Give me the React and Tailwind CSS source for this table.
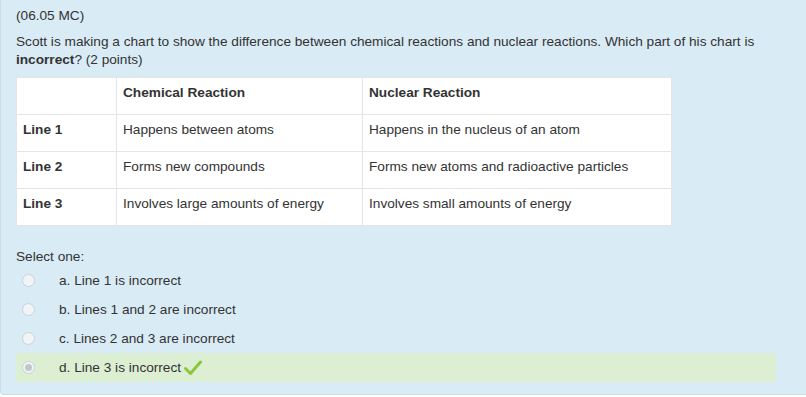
const rows = [
  ['Line 1', 'Happens between atoms', 'Happens in the nucleus of an atom'],
  ['Line 2', 'Forms new compounds', 'Forms new atoms and radioactive particles'],
  ['Line 3', 'Involves large amounts of energy', 'Involves small amounts of energy'],
];

const options = [
  { label: 'a. Line 1 is incorrect' },
  { label: 'b. Lines 1 and 2 are incorrect' },
  { label: 'c. Lines 2 and 3 are incorrect' },
  { label: 'd. Line 3 is incorrect', checked: true, correct: true },
];

function Radio({ checked }) {
  return (
    <span className="flex h-[13px] w-[13px] items-center justify-center rounded-full border border-[#c9d3d8] bg-[#f1f4f6]">
      {checked && <span className="h-[7px] w-[7px] rounded-full bg-[#c2c6c8]" />}
    </span>
  );
}

function Check() {
  return (
    <svg width="18" height="16" viewBox="0 0 18 16" className="ml-[3px] inline-block">
      <path d="M1.5 8.5 L6.5 13.5 L16.5 2" fill="none" stroke="#8cc63f" strokeWidth="3" strokeLinecap="round" strokeLinejoin="round" />
    </svg>
  );
}

export default function App() {
  return (
    <div className="min-h-screen bg-white font-['Liberation_Sans',Arial,sans-serif] text-[13.65px] leading-[18px] text-[#333]">
      <div className="h-[395px] rounded-bl-[4px] border-l border-b border-[#c6dfec] bg-[#d9ebf5] pl-[15px] pr-[30px] pt-[7px]">
        <p>(06.05 MC)</p>
        <p className="mt-[8px]">
          Scott is making a chart to show the difference between chemical reactions and nuclear reactions. Which part of his chart is{' '}
          <strong className="font-bold">incorrect</strong>? (2 points)
        </p>
        <table className="mt-[8px] w-[656px] border-collapse bg-white">
          <thead>
            <tr className="h-[37px]">
              <th className="w-[100px] border border-[#e3e6e8]"></th>
              <th className="w-[246px] border border-[#e3e6e8] px-[6px] pt-[6px] text-left align-top font-bold">Chemical Reaction</th>
              <th className="border border-[#e3e6e8] px-[6px] pt-[6px] text-left align-top font-bold">Nuclear Reaction</th>
            </tr>
          </thead>
          <tbody>
            {rows.map((r) => (
              <tr key={r[0]} className="h-[37px]">
                <td className="border border-[#e3e6e8] px-[6px] pt-[6px] align-top font-bold">{r[0]}</td>
                <td className="border border-[#e3e6e8] px-[6px] pt-[6px] align-top">{r[1]}</td>
                <td className="border border-[#e3e6e8] px-[6px] pt-[6px] align-top">{r[2]}</td>
              </tr>
            ))}
          </tbody>
        </table>
        <p className="mt-[22px]">Select one:</p>
        <div className="flex flex-col">
          {options.map((o) => (
            <div
              key={o.label}
              className={`flex h-[29px] items-center ${o.correct ? 'bg-[#dcefd2]' : ''}`}
            >
              <span className="flex w-[43px] pl-[6px]">
                <Radio checked={o.checked} />
              </span>
              <span className="flex items-center">
                {o.label}
                {o.correct && <Check />}
              </span>
            </div>
          ))}
        </div>
      </div>
    </div>
  );
}
